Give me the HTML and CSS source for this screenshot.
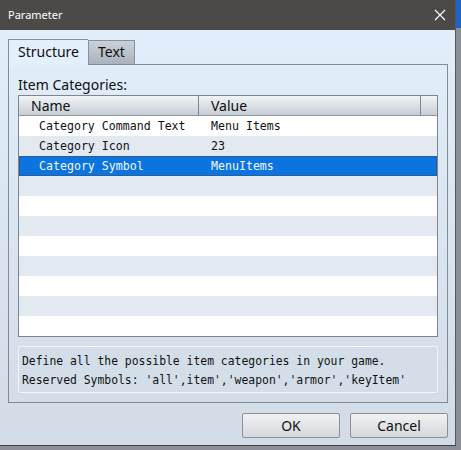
FILE: index.html
```html
<!DOCTYPE html>
<html lang="en">
<head>
    <meta charset="UTF-8">
    <title>Parameter</title>
    <link rel="stylesheet" href="styles.css">
</head>
<body>
    <div class="window">
        <div class="titlebar">
            <span class="title">Parameter</span>
            <svg class="close" width="12" height="12" viewBox="0 0 12 12">
                <path d="M1 1L11 11M11 1L1 11" stroke="#ffffff" stroke-width="1.2" fill="none"/>
            </svg>
        </div>

        <div class="client">
            <div class="tabs">
                <div class="tab active">Structure</div>
                <div class="tab">Text</div>
            </div>

            <div class="panel">
                <div class="label">Item Categories:</div>

                <div class="table">
                    <div class="thead">
                        <div class="th col-name">Name</div>
                        <div class="th col-value">Value</div>
                        <div class="th col-pad"></div>
                    </div>
                    <div class="row">
                        <div class="td col-name">Category Command Text</div>
                        <div class="td col-value">Menu Items</div>
                    </div>
                    <div class="row">
                        <div class="td col-name">Category Icon</div>
                        <div class="td col-value">23</div>
                    </div>
                    <div class="row selected">
                        <div class="td col-name">Category Symbol</div>
                        <div class="td col-value">MenuItems</div>
                    </div>
                    <div class="row"></div>
                    <div class="row"></div>
                    <div class="row"></div>
                    <div class="row"></div>
                    <div class="row"></div>
                    <div class="row"></div>
                    <div class="row"></div>
                    <div class="row"></div>
                </div>

                <div class="desc">
                    Define all the possible item categories in your game.<br>
                    Reserved Symbols: 'all',item','weapon','armor','keyItem'
                </div>
            </div>

            <div class="buttons">
                <div class="btn">OK</div>
                <div class="btn">Cancel</div>
            </div>
        </div>
    </div>
</body>
</html>
```

FILE: styles.css
```css
* {
    margin: 0;
    padding: 0;
    box-sizing: border-box;
}

body {
    width: 461px;
    height: 450px;
    overflow: hidden;
    font-family: 'Noto Sans', 'DejaVu Sans', sans-serif;
    background: linear-gradient(180deg, #1a64c4 0, #1a64c4 28px, #8c9096 28px, #8c9096 100%);
}

.window {
    width: 456px;
    height: 446px;
    border-right: 1px solid #54575b;
    border-bottom: 1px solid #3e3f41;
    background: linear-gradient(180deg, #e3effc 0%, #d1dce7 100%);
}

.titlebar {
    height: 30px;
    background: #4c4a47;
    color: #ffffff;
    display: flex;
    align-items: center;
    justify-content: space-between;
    padding: 0 9px 0 8px;
}

.title {
    font-size: 11px;
    padding-bottom: 1px;
}

.close {
    display: block;
}

.client {
    padding: 9px 8px 0 8px;
}

.tabs {
    display: flex;
    align-items: flex-end;
    height: 25px;
}

.tab {
    height: 24px;
    width: 47px;
    font-size: 14px;
    line-height: 22px;
    color: #0e0e0e;
    text-align: center;
    border: 1px solid #8a9098;
    border-bottom: none;
    background: linear-gradient(180deg, #c9d1da 0%, #aab3bd 100%);
}

.tab.active {
    width: 80px;
    height: 26px;
    margin-bottom: -1px;
    line-height: 24px;
    background: #e3effc;
    border-right: none;
    position: relative;
    z-index: 1;
}

.panel {
    width: 440px;
    border: 1px solid #858b93;
    padding: 10px 8px 9px 9px;
}

.label {
    font-size: 14px;
    line-height: 20px;
    color: #0e0e0e;
}

.table {
    width: 420px;
    border: 1px solid #7f858d;
    background: #ffffff;
}

.thead {
    display: flex;
    height: 20px;
    background: linear-gradient(180deg, #f2f4f6 0%, #c6cdd5 100%);
    border-bottom: 1px solid #8f969e;
}

.th {
    font-size: 14px;
    line-height: 19px;
    color: #0e0e0e;
    padding-left: 12px;
    border-right: 1px solid #7f858d;
}

.th.col-name { width: 180px; }
.th.col-value { width: 222px; }
.th.col-pad { flex: 1; border-right: none; }

.row {
    display: flex;
    height: 20px;
    background: #ffffff;
    font-family: 'DejaVu Sans Mono', 'Liberation Mono', monospace;
    font-size: 11.6px;
    line-height: 21px;
    color: #111;
}

.row:nth-child(odd) {
    background: #e2e9f1;
}

.row.selected {
    background: #0b74df;
    color: #f4f8ff;
    box-shadow: inset 0 0 0 1px #2c5e9c;
}

.td.col-name {
    width: 180px;
    padding-left: 20px;
}

.td.col-value {
    padding-left: 12px;
}

.desc {
    margin-top: 9px;
    height: 47px;
    width: 420px;
    border: 1px solid #f4f7fa;
    border-radius: 3px;
    background: #d3dee9;
    padding: 5px 0 0 3px;
    font-family: 'DejaVu Sans Mono', 'Liberation Mono', monospace;
    font-size: 11.4px;
    line-height: 19px;
    color: #111;
}

.buttons {
    display: flex;
    justify-content: flex-end;
    gap: 10px;
    padding: 10px 0 0 0;
    width: 440px;
}

.btn {
    width: 98px;
    height: 25px;
    border: 1px solid #8c8f93;
    border-radius: 2px;
    background: linear-gradient(180deg, #f1f2f3 0%, #d4d8dc 100%);
    font-size: 14px;
    line-height: 23px;
    text-align: center;
    color: #111;
}
```
